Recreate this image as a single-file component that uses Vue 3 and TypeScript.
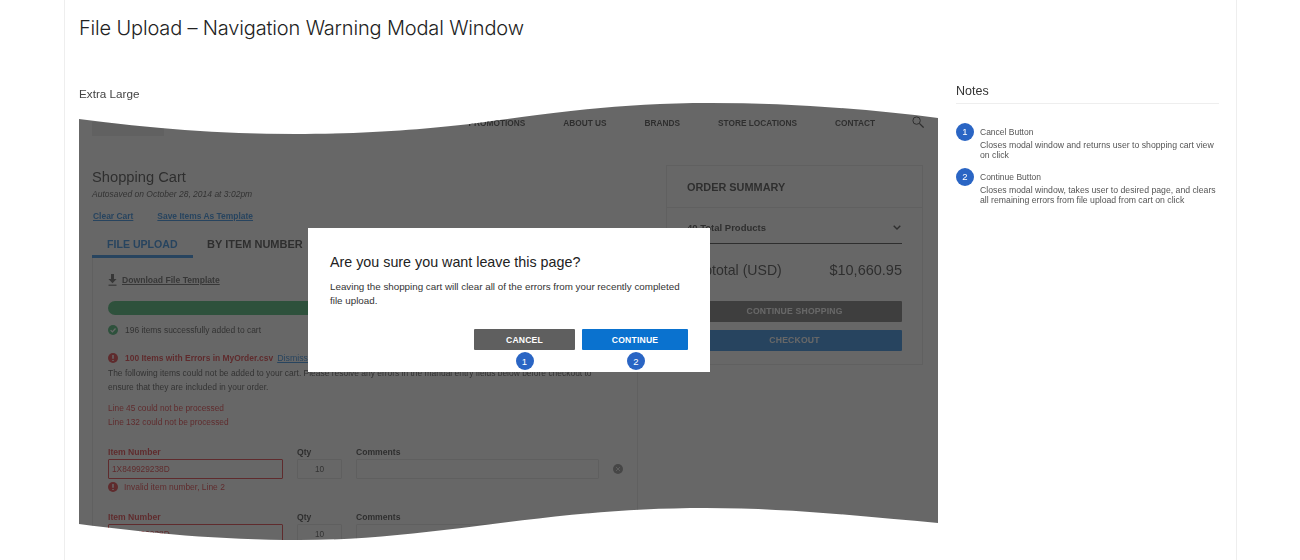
<template>
  <div class="page">
    <h1 class="title">File Upload – Navigation Warning Modal Window</h1>
    <div class="columns">
      <section class="preview">
        <h2 class="size-label">Extra Large</h2>
        <div class="mock">
          <header class="nav">
            <div class="logo"></div>
            <nav class="nav-links">
              <span v-for="link in navLinks" :key="link">{{ link }}</span>
              <svg class="search" viewBox="0 0 12 12" width="12" height="12">
                <circle cx="4.6" cy="4.6" r="3.7" fill="none" stroke="#333" stroke-width="1" />
                <path d="M7.4 7.4 11.6 11.6" stroke="#333" stroke-width="1.3" />
              </svg>
            </nav>
          </header>

          <div class="cart">
            <div class="cart-main">
              <h3 class="cart-title">Shopping Cart</h3>
              <p class="autosaved">Autosaved on October 28, 2014 at 3:02pm</p>
              <div class="cart-links">
                <a>Clear Cart</a>
                <a>Save Items As Template</a>
              </div>
              <div class="tabs">
                <span class="tab active">FILE UPLOAD</span>
                <span class="tab">BY ITEM NUMBER</span>
              </div>
              <div class="panel">
                <div class="download">
                  <svg viewBox="0 0 9 12" width="9" height="12">
                    <path d="M3 0h3v5h2.600L4.500 9.300.4 5H3z" fill="#555" />
                    <path d="M.5 11.200h8" stroke="#555" stroke-width="1.200" />
                  </svg>
                  <a>Download File Template</a>
                </div>
                <div class="progress"></div>
                <div class="status success">
                  <svg viewBox="0 0 10 10" width="10" height="10">
                    <circle cx="5" cy="5" r="5" fill="#34b066" />
                    <path d="M2.600 5.100 4.400 6.900 7.500 3.500" fill="none" stroke="#fff" stroke-width="1.300" />
                  </svg>
                  <span>196 items successfully added to cart</span>
                </div>
                <div class="status failed">
                  <svg viewBox="0 0 10 10" width="10" height="10">
                    <circle cx="5" cy="5" r="5" fill="#e02a30" />
                    <path d="M5 2v3.800M5 6.900v1.200" stroke="#fff" stroke-width="1.500" />
                  </svg>
                  <strong>100 Items with Errors in MyOrder.csv</strong>
                  <a>Dismiss</a>
                </div>
                <p class="explain">
                  The following items could not be added to your cart. Please resolve any errors in the manual entry fields below before checkout to<br />
                  ensure that they are included in your order.
                </p>
                <div class="line-errors">
                  <div>Line 45 could not be processed</div>
                  <div>Line 132 could not be processed</div>
                </div>
                <div v-for="row in itemRows" :key="row.line" class="item-row">
                  <div class="field">
                    <label class="bad">Item Number</label>
                    <div class="input bad-input">1X849929238D</div>
                  </div>
                  <div class="field">
                    <label>Qty</label>
                    <div class="input qty-input">10</div>
                  </div>
                  <div class="field">
                    <label>Comments</label>
                    <div class="input"></div>
                  </div>
                  <svg class="remove" viewBox="0 0 10 10" width="10" height="10">
                    <circle cx="5" cy="5" r="5" fill="#8a8a8a" />
                    <path d="M3 3l4 4M7 3l-4 4" stroke="#ddd" stroke-width="1" />
                  </svg>
                  <div class="invalid">
                    <svg viewBox="0 0 10 10" width="10" height="10">
                      <circle cx="5" cy="5" r="5" fill="#e02a30" />
                      <path d="M5 2v3.800M5 6.900v1.200" stroke="#fff" stroke-width="1.500" />
                    </svg>
                    Invalid item number, Line {{ row.line }}
                  </div>
                </div>
              </div>
            </div>

            <aside class="summary">
              <div class="summary-head">ORDER SUMMARY</div>
              <div class="summary-body">
                <div class="products">
                  <span>40 Total Products</span>
                  <svg viewBox="0 0 8 5" width="8" height="5">
                    <path d="M.7.7 4 4 7.300.7" fill="none" stroke="#333" stroke-width="1.400" />
                  </svg>
                </div>
                <div class="subtotal">
                  <span class="subtotal-label">Subtotal (USD)</span>
                  <span>$10,660.95</span>
                </div>
                <div class="summary-btn dark">CONTINUE SHOPPING</div>
                <div class="summary-btn blue">CHECKOUT</div>
              </div>
            </aside>
          </div>

          <div class="dim"></div>

          <div class="modal">
            <h4 class="modal-title">Are you sure you want leave this page?</h4>
            <p class="modal-text">
              Leaving the shopping cart will clear all of the errors from your recently completed file upload.
            </p>
            <div class="modal-actions">
              <button class="btn btn-cancel">CANCEL<span class="badge pin">1</span></button>
              <button class="btn btn-continue">CONTINUE<span class="badge pin">2</span></button>
            </div>
          </div>
        </div>
      </section>

      <aside class="notes">
        <h2 class="notes-title">Notes</h2>
        <div v-for="(note, i) in notes" :key="note.title" class="note">
          <span class="badge">{{ i + 1 }}</span>
          <div class="note-text">
            <div class="note-name">{{ note.title }}</div>
            <div class="note-desc">{{ note.text }}</div>
          </div>
        </div>
      </aside>
    </div>
  </div>
</template>

<script setup lang="ts">
interface Note {
  title: string
  text: string
}

const navLinks: string[] = ['PROMOTIONS', 'ABOUT US', 'BRANDS', 'STORE LOCATIONS', 'CONTACT']

const itemRows = [{ line: 2 }, { line: 3 }]

const notes: Note[] = [
  {
    title: 'Cancel Button',
    text: 'Closes modal window and returns user to shopping cart view on click'
  },
  {
    title: 'Continue Button',
    text: 'Closes modal window, takes user to desired page, and clears all remaining errors from file upload from cart on click'
  }
]
</script>

<style>
html,
body {
  margin: 0;
  background: #fff;
  overflow: hidden;
}
</style>

<style scoped>
.page {
  box-sizing: border-box;
  width: 1173px;
  height: 560px;
  margin-left: 64px;
  padding: 0 17px 0 14px;
  border-left: 1px solid #eeeeee;
  border-right: 1px solid #eeeeee;
  font-family: 'Liberation Sans', Arial, sans-serif;
  color: #333;
  overflow: hidden;
}

.title {
  margin: 0;
  padding-top: 15px;
  font-family: Inter, 'Liberation Sans', sans-serif;
  font-size: 20px;
  line-height: 26px;
  font-weight: 300;
  letter-spacing: -0.16px;
  color: #222;
}

.columns {
  display: flex;
  margin-top: 45px;
  filter: blur(0.25px);
}

.preview {
  width: 859px;
  flex: none;
}

.size-label {
  margin: 0;
  font-size: 11.700px;
  line-height: 16px;
  font-weight: 400;
  color: #444;
}

.mock {
  position: relative;
  width: 859px;
  height: 438px;
  margin-top: 1px;
  background: #fff;
  overflow: hidden;
  clip-path: path('M0 16C70 25 140 31 216 31C291 31 346 26 391 21C441 15 521 0 631 0C710 0 790 6 859 15V420C790 414 710 405 627 405C460 405 360 437 220 437C140 437 70 430 0 421Z');
}

.nav {
  display: flex;
  height: 40px;
  padding: 0 14px 0 13px;
  box-sizing: border-box;
}

.logo {
  width: 72px;
  height: 14px;
  margin-top: 19px;
  background: #eaeaea;
}

.nav-links {
  display: flex;
  align-items: center;
  gap: 38px;
  margin-left: auto;
  font-size: 8.300px;
  font-weight: 700;
  color: #333;
}

.search {
  margin-left: -1px;
  margin-top: -2px;
}

.cart {
  display: flex;
  padding-left: 13px;
  filter: blur(0.2px);
}

.cart-main {
  width: 546px;
  flex: none;
}

.cart-title {
  margin: 25px 0 0;
  font-size: 14.700px;
  line-height: 18px;
  font-weight: 400;
  color: #333;
}

.autosaved {
  margin: 2px 0 0;
  font-size: 8.500px;
  line-height: 12px;
  font-style: italic;
  color: #444;
}

.cart-links {
  display: flex;
  gap: 24px;
  margin-top: 10px;
  padding-left: 1px;
  font-size: 8.450px;
  line-height: 12px;
  font-weight: 700;
}

.cart-links a {
  color: #1a80e0;
  text-decoration: underline;
}

.tabs {
  display: flex;
  margin-top: 14px;
  height: 22px;
}

.tab {
  font-size: 11px;
  line-height: 17px;
  font-weight: 700;
  color: #333;
  margin-left: 14px;
}

.tab.active {
  box-sizing: border-box;
  width: 101px;
  margin-left: 0;
  padding-left: 15px;
  font-size: 10.600px;
  color: #1a80e0;
  border-bottom: 3px solid #1a80e0;
}

.panel {
  box-sizing: border-box;
  height: 300px;
  padding: 16px 15px 0;
  border: 1px solid #e4e4e4;
  border-bottom: 0;
  border-top-width: 0;
  font-size: 8.450px;
  line-height: 12px;
}

.download {
  display: flex;
  align-items: center;
  gap: 5px;
  height: 12px;
  font-weight: 700;
  font-size: 8.600px;
  color: #555;
}

.download a {
  text-decoration: underline;
}

.progress {
  height: 14px;
  margin-top: 15px;
  border-radius: 7px;
  background: #34b066;
}

.status {
  display: flex;
  align-items: center;
  gap: 7px;
  height: 12px;
  margin-top: 9px;
  color: #444;
}

.status.failed {
  margin-top: 16px;
}

.status.failed strong {
  color: #e02a30;
}

.status.failed a {
  margin-left: -3px;
  font-size: 8.800px;
  color: #1a80e0;
  text-decoration: underline;
}

.explain {
  margin: 2px 0 0;
  line-height: 14px;
  color: #444;
  white-space: nowrap;
}

.line-errors {
  margin-top: 7px;
  font-size: 8.350px;
  line-height: 14px;
  color: #e02a30;
}

.item-row {
  display: grid;
  grid-template-columns: 175px 45px 243px 10px;
  column-gap: 14px;
  margin-top: 17px;
}

.item-row + .item-row {
  margin-top: 18px;
}

.field label {
  display: block;
  font-size: 8.600px;
  font-weight: 700;
  color: #333;
}

.field label.bad {
  color: #e02a30;
}

.input {
  box-sizing: border-box;
  height: 20px;
  margin-top: 1px;
  padding-left: 3px;
  border: 1px solid #e2e2e2;
  border-radius: 1px;
  font-size: 8.300px;
  line-height: 18px;
  color: #444;
}

.bad-input {
  border-color: #e02a30;
  color: #e02a30;
}

.qty-input {
  padding: 0;
  text-align: center;
}

.remove {
  align-self: end;
  margin-bottom: 5px;
}

.invalid {
  grid-column: 1 / -1;
  display: flex;
  align-items: center;
  gap: 6px;
  height: 12px;
  margin-top: 2px;
  color: #e02a30;
}

.summary {
  box-sizing: border-box;
  width: 257px;
  height: 200px;
  margin: 22px 0 0 28px;
  border: 1px solid #e4e4e4;
}

.summary-head {
  box-sizing: border-box;
  height: 42px;
  padding-left: 20px;
  border-bottom: 1px solid #e4e4e4;
  font-size: 10.900px;
  line-height: 43px;
  font-weight: 700;
  color: #333;
}

.summary-body {
  padding: 0 20px;
}

.products {
  box-sizing: border-box;
  display: flex;
  align-items: center;
  justify-content: space-between;
  height: 36px;
  padding: 3px 1px 0 0;
  border-bottom: 1px solid #333;
  font-size: 9.500px;
  font-weight: 700;
  color: #333;
}

.subtotal {
  display: flex;
  justify-content: space-between;
  height: 57px;
  padding-top: 17px;
  box-sizing: border-box;
  font-size: 14.500px;
  line-height: 18px;
  color: #333;
}

.subtotal-label {
  font-size: 14.100px;
}

.summary-btn {
  height: 21px;
  border-radius: 1px;
  font-size: 8.600px;
  font-weight: 700;
  line-height: 21px;
  letter-spacing: 0.2px;
  text-align: center;
  color: #fff;
}

.summary-btn.dark {
  background: #6e6e6e;
}

.summary-btn.blue {
  margin-top: 8px;
  background: #1a80e0;
}

.dim {
  position: absolute;
  inset: 0;
  background: rgba(45, 45, 45, 0.72);
}

.modal {
  position: absolute;
  left: 229px;
  top: 125px;
  box-sizing: border-box;
  width: 402px;
  height: 144px;
  padding: 24px 22px 0 22px;
  background: #fff;
}

.modal-title {
  margin: 0;
  font-size: 14.300px;
  line-height: 20px;
  font-weight: 400;
  color: #222;
}

.modal-text {
  margin: 8px 8px 0 0;
  font-size: 9.800px;
  line-height: 14px;
  color: #333;
}

.modal-actions {
  display: flex;
  justify-content: flex-end;
  gap: 7px;
  margin-top: 21px;
}

.btn {
  position: relative;
  height: 21px;
  padding: 0;
  border: 0;
  border-radius: 1px;
  font-family: inherit;
  font-size: 8.600px;
  font-weight: 700;
  letter-spacing: 0.2px;
  color: #fff;
}

.btn-cancel {
  width: 101px;
  background: #5f5f5f;
}

.btn-continue {
  width: 106px;
  background: #0a72cf;
}

.badge {
  display: flex;
  align-items: center;
  justify-content: center;
  flex: none;
  width: 18px;
  height: 18px;
  border-radius: 50%;
  background: #2a65c4;
  color: #fff;
  font-size: 9.500px;
  font-weight: 400;
  letter-spacing: 0;
}

.pin {
  position: absolute;
  left: 50%;
  top: 23px;
  margin-left: -9px;
}

.btn-continue .pin {
  margin-left: -8px;
}

.notes {
  width: 263px;
  margin-left: 18px;
}

.notes-title {
  margin: 0;
  height: 18px;
  box-sizing: border-box;
  border-bottom: 1px solid #eeeeee;
  font-size: 12.500px;
  line-height: 11px;
  font-weight: 400;
  color: #333;
}

.note {
  display: flex;
  gap: 6px;
  margin-top: 19px;
  font-size: 8.500px;
  line-height: 10px;
  color: #555;
}

.note + .note {
  margin-top: 8px;
}

.note-text {
  padding-top: 4px;
}

.note-name {
  margin-bottom: 3px;
}

.note-desc {
  font-size: 8.700px;
}
</style>
